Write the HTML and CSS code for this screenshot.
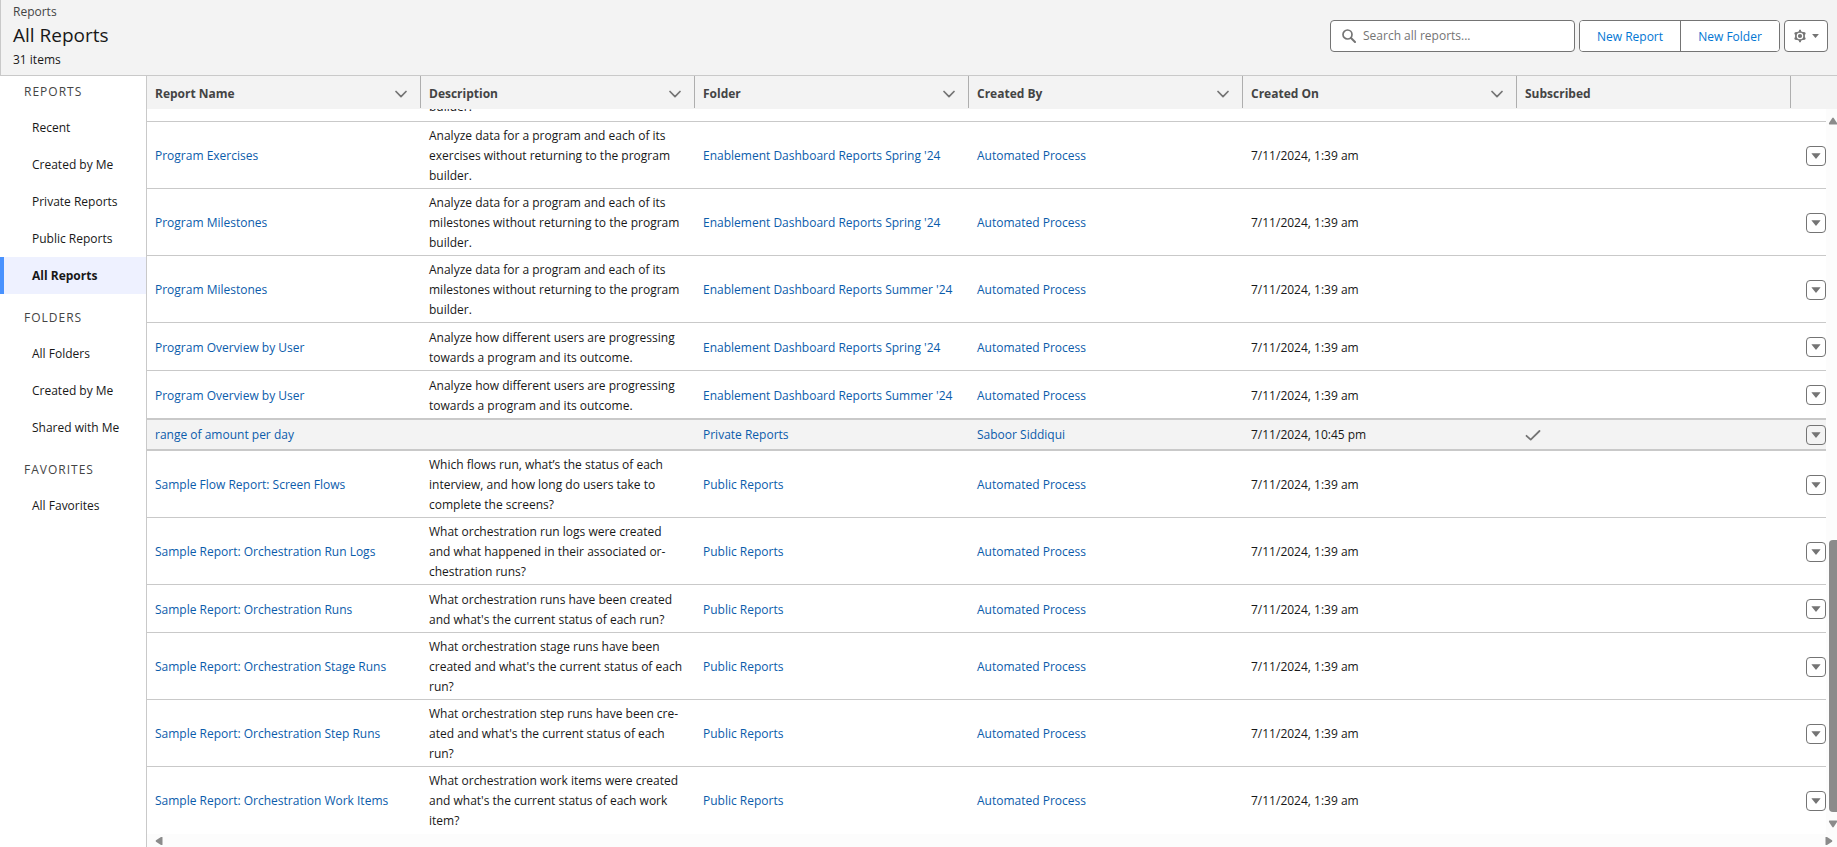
FILE: index.html
```
<!DOCTYPE html>
<html lang="en">
<head>
<meta charset="utf-8">
<title>All Reports</title>
<link rel="stylesheet" href="styles.css">
</head>
<body>
<svg class="sprite" aria-hidden="true">
  <symbol id="chevron" viewBox="0 0 12 12"><path d="M1 3.500 6 8.700 11 3.500" fill="none" stroke="currentColor" stroke-width="1.700" stroke-linecap="round" stroke-linejoin="round"/></symbol>
  <symbol id="down" viewBox="0 0 10 8"><path d="M.8 1.200H9.200Q9.600 1.400 9.300 1.800L5.400 6.600Q5 7 4.600 6.600L.7 1.800Q.4 1.400.8 1.200Z" fill="currentColor"/></symbol>
  <symbol id="check" viewBox="0 0 16 16"><path d="M1.500 8.800 5.700 12.600 14.500 4" fill="none" stroke="currentColor" stroke-width="1.800" stroke-linecap="round" stroke-linejoin="round"/></symbol>
</svg>
<div class="app">
  <header class="page-header">
    <div class="page-title">
      <p class="eyebrow">Reports</p>
      <h1>All Reports</h1>
      <p class="count">31 items</p>
    </div>
    <div class="actions">
      <label class="search">
        <svg class="search-icon" viewBox="0 0 14 14" aria-hidden="true"><circle cx="5.500" cy="5.500" r="4.500" fill="none" stroke="currentColor" stroke-width="1.700"/><path d="M9 9l4 4" stroke="currentColor" stroke-width="2" stroke-linecap="round"/></svg>
        <input type="search" placeholder="Search all reports..." aria-label="Search all reports">
      </label>
      <div class="button-group">
        <button type="button">New Report</button>
        <button type="button">New Folder</button>
      </div>
      <button type="button" class="settings" aria-label="Settings">
        <svg class="gear" viewBox="0 0 14 14" aria-hidden="true"><path d="M7 .8 8.300 3.200 12.200 3.900 11.200 7 12.200 10.100 8.300 10.800 7 13.200 5.700 10.800 1.800 10.100 2.800 7 1.800 3.900 5.700 3.200Z" fill="currentColor" stroke="currentColor" stroke-width="1" stroke-linejoin="round"/><circle cx="7" cy="7" r="2.700" fill="none" stroke="#fff" stroke-width="1.200"/></svg>
        <svg class="gear-arrow" aria-hidden="true"><use href="#down"/></svg>
      </button>
    </div>
  </header>
  <div class="content">
    <nav class="sidebar" aria-label="Reports and folders">
      <section>
        <h2>Reports</h2>
        <ul>
          <li><a href="#recent">Recent</a></li>
          <li><a href="#created">Created by Me</a></li>
          <li><a href="#private">Private Reports</a></li>
          <li><a href="#public">Public Reports</a></li>
          <li><a href="#all" class="active" aria-current="page">All Reports</a></li>
        </ul>
      </section>
      <section>
        <h2>Folders</h2>
        <ul>
          <li><a href="#folders">All Folders</a></li>
          <li><a href="#folders-created">Created by Me</a></li>
          <li><a href="#folders-shared">Shared with Me</a></li>
        </ul>
      </section>
      <section>
        <h2>Favorites</h2>
        <ul>
          <li><a href="#favorites">All Favorites</a></li>
        </ul>
      </section>
    </nav>
    <main class="list">
      <table class="head">
        <colgroup><col span="6"><col class="col-action-head"></colgroup>
        <thead>
          <tr>
            <th scope="col"><div class="th">Report Name<svg aria-hidden="true"><use href="#chevron"/></svg></div></th>
            <th scope="col"><div class="th">Description<svg aria-hidden="true"><use href="#chevron"/></svg></div></th>
            <th scope="col"><div class="th">Folder<svg aria-hidden="true"><use href="#chevron"/></svg></div></th>
            <th scope="col"><div class="th">Created By<svg aria-hidden="true"><use href="#chevron"/></svg></div></th>
            <th scope="col"><div class="th">Created On<svg aria-hidden="true"><use href="#chevron"/></svg></div></th>
            <th scope="col"><div class="th">Subscribed</div></th>
            <th aria-label="Actions"></th>
          </tr>
        </thead>
      </table>
      <div class="viewport" id="viewport">
        <table>
          <colgroup><col span="6"><col class="col-action"></colgroup>
          <tbody>
            <tr class="partial"><td></td><td>builder.</td><td></td><td></td><td></td><td></td><td></td></tr>
            <tr><td><a href="#r">Program Exercises</a></td><td>Analyze data for a program and each of its<br>exercises without returning to the program<br>builder.</td><td><a href="#f">Enablement Dashboard Reports Spring '24</a></td><td><a href="#u">Automated Process</a></td><td>7/11/2024, 1:39 am</td><td></td><td><button type="button" aria-label="Show actions"><svg aria-hidden="true"><use href="#down"/></svg></button></td></tr>
            <tr><td><a href="#r">Program Milestones</a></td><td>Analyze data for a program and each of its<br>milestones without returning to the program<br>builder.</td><td><a href="#f">Enablement Dashboard Reports Spring '24</a></td><td><a href="#u">Automated Process</a></td><td>7/11/2024, 1:39 am</td><td></td><td><button type="button" aria-label="Show actions"><svg aria-hidden="true"><use href="#down"/></svg></button></td></tr>
            <tr><td><a href="#r">Program Milestones</a></td><td>Analyze data for a program and each of its<br>milestones without returning to the program<br>builder.</td><td><a href="#f">Enablement Dashboard Reports Summer '24</a></td><td><a href="#u">Automated Process</a></td><td>7/11/2024, 1:39 am</td><td></td><td><button type="button" aria-label="Show actions"><svg aria-hidden="true"><use href="#down"/></svg></button></td></tr>
            <tr><td><a href="#r">Program Overview by User</a></td><td>Analyze how different users are progressing<br>towards a program and its outcome.</td><td><a href="#f">Enablement Dashboard Reports Spring '24</a></td><td><a href="#u">Automated Process</a></td><td>7/11/2024, 1:39 am</td><td></td><td><button type="button" aria-label="Show actions"><svg aria-hidden="true"><use href="#down"/></svg></button></td></tr>
            <tr><td><a href="#r">Program Overview by User</a></td><td>Analyze how different users are progressing<br>towards a program and its outcome.</td><td><a href="#f">Enablement Dashboard Reports Summer '24</a></td><td><a href="#u">Automated Process</a></td><td>7/11/2024, 1:39 am</td><td></td><td><button type="button" aria-label="Show actions"><svg aria-hidden="true"><use href="#down"/></svg></button></td></tr>
            <tr class="highlighted"><td><a href="#r">range of amount per day</a></td><td></td><td><a href="#f">Private Reports</a></td><td><a href="#u">Saboor Siddiqui</a></td><td>7/11/2024, 10:45 pm</td><td><svg class="check" role="img" aria-label="Subscribed"><use href="#check"/></svg></td><td><button type="button" aria-label="Show actions"><svg aria-hidden="true"><use href="#down"/></svg></button></td></tr>
            <tr><td><a href="#r">Sample Flow Report: Screen Flows</a></td><td>Which flows run, what’s the status of each<br>interview, and how long do users take to<br>complete the screens?</td><td><a href="#f">Public Reports</a></td><td><a href="#u">Automated Process</a></td><td>7/11/2024, 1:39 am</td><td></td><td><button type="button" aria-label="Show actions"><svg aria-hidden="true"><use href="#down"/></svg></button></td></tr>
            <tr><td><a href="#r">Sample Report: Orchestration Run Logs</a></td><td>What orchestration run logs were created<br>and what happened in their associated or-<br>chestration runs?</td><td><a href="#f">Public Reports</a></td><td><a href="#u">Automated Process</a></td><td>7/11/2024, 1:39 am</td><td></td><td><button type="button" aria-label="Show actions"><svg aria-hidden="true"><use href="#down"/></svg></button></td></tr>
            <tr><td><a href="#r">Sample Report: Orchestration Runs</a></td><td>What orchestration runs have been created<br>and what's the current status of each run?</td><td><a href="#f">Public Reports</a></td><td><a href="#u">Automated Process</a></td><td>7/11/2024, 1:39 am</td><td></td><td><button type="button" aria-label="Show actions"><svg aria-hidden="true"><use href="#down"/></svg></button></td></tr>
            <tr><td><a href="#r">Sample Report: Orchestration Stage Runs</a></td><td>What orchestration stage runs have been<br>created and what's the current status of each<br>run?</td><td><a href="#f">Public Reports</a></td><td><a href="#u">Automated Process</a></td><td>7/11/2024, 1:39 am</td><td></td><td><button type="button" aria-label="Show actions"><svg aria-hidden="true"><use href="#down"/></svg></button></td></tr>
            <tr><td><a href="#r">Sample Report: Orchestration Step Runs</a></td><td>What orchestration step runs have been cre-<br>ated and what's the current status of each<br>run?</td><td><a href="#f">Public Reports</a></td><td><a href="#u">Automated Process</a></td><td>7/11/2024, 1:39 am</td><td></td><td><button type="button" aria-label="Show actions"><svg aria-hidden="true"><use href="#down"/></svg></button></td></tr>
            <tr><td><a href="#r">Sample Report: Orchestration Work Items</a></td><td>What orchestration work items were created<br>and what's the current status of each work<br>item?</td><td><a href="#f">Public Reports</a></td><td><a href="#u">Automated Process</a></td><td>7/11/2024, 1:39 am</td><td></td><td><button type="button" aria-label="Show actions"><svg aria-hidden="true"><use href="#down"/></svg></button></td></tr>
          </tbody>
        </table>
      </div>
      <div class="vbar" aria-hidden="true">
        <svg class="arrow up" viewBox="0 0 10 8"><path d="M4.300 1Q5 .2 5.700 1L9 6Q9.300 7.500 8.500 7.500H1.500Q.7 7.500 1 6Z" fill="currentColor"/></svg>
        <div class="vbar-track"><div class="vbar-thumb"></div></div>
        <svg class="arrow" viewBox="0 0 10 8"><path d="M4.300 7Q5 7.800 5.700 7L9 2Q9.300.5 8.500.5H1.500Q.7.5 1 2Z" fill="currentColor"/></svg>
      </div>
      <div class="hbar" aria-hidden="true">
        <svg class="harrow" viewBox="0 0 8 10"><path d="M1 4.300Q.2 5 1 5.700L6 9Q7.500 9.300 7.500 8.500V1.500Q7.500.7 6 1Z" fill="currentColor"/></svg>
        <svg class="harrow" viewBox="0 0 8 10"><path d="M7 4.300Q7.800 5 7 5.700L2 9Q.5 9.300.5 8.500V1.500Q.5.7 2 1Z" fill="currentColor"/></svg>
      </div>
    </main>
  </div>
</div>
<script src="app.js"></script>
</body>
</html>
```
FILE: styles.css
```
* { box-sizing: border-box; }

body {
  margin: 0;
  color: #181818;
  background: #fff;
  font: 12px/20px "Segoe UI", "Open Sans", "Noto Sans", sans-serif;
}

h1, h2, p, ul { margin: 0; padding: 0; font-weight: 400; }
ul { list-style: none; }
a { color: #0b5cab; text-decoration: none; }
a:hover { text-decoration: underline; }
button, input { font: inherit; }
button { padding: 0; color: #0176d3; background: #fff; cursor: pointer; }
svg { display: block; flex: none; }

.sprite { position: absolute; width: 0; height: 0; }

.app { display: flex; flex-direction: column; height: 100vh; overflow: hidden; }

.page-header {
  display: flex;
  justify-content: space-between;
  align-items: flex-start;
  padding: 2px 9px 5px 12px;
  border-left: 1px solid #c9c9c9;
  border-bottom: 1px solid #c9c9c9;
  background: #f3f3f3;
}
.page-title h1 { padding-bottom: 2px; font-size: 19px; line-height: 26px; }
.page-title .eyebrow { color: #444; }

.actions { display: flex; gap: 4px; padding-top: 18px; }
.search, .button-group, .settings {
  display: flex;
  align-items: center;
  height: 32px;
  border: 1px solid #747474;
  border-radius: 4px;
  background: #fff;
}
.search { width: 245px; padding-left: 11px; gap: 7px; color: #747474; }
.search-icon { width: 14px; height: 14px; }
.search input { flex: 1; min-width: 0; padding: 0; border: 0; outline: 0; background: none; color: #181818; }
.search input::placeholder { color: #747474; opacity: 1; }
.button-group { overflow: hidden; }
.button-group button { width: 100px; height: 30px; padding-top: 1px; border: 0; }
.button-group button + button { border-left: 1px solid #747474; width: 99px; }
.settings { justify-content: center; gap: 5px; width: 44px; color: #747474; }
.gear { width: 14px; height: 14px; }
.gear-arrow { width: 7px; height: 6px; }

.content { display: flex; flex: 1; min-height: 0; }

.sidebar { flex: none; width: 147px; border-right: 1px solid #c9c9c9; }
.sidebar section + section { padding-top: 8px; }
.sidebar h2 {
  padding: 6px 24px 7px;
  color: #444;
  font-size: 12px;
  line-height: 20px;
  letter-spacing: 1px;
  text-transform: uppercase;
}
.sidebar a { display: block; padding: 0 8px 0 32px; color: #181818; line-height: 37px; white-space: nowrap; }
.sidebar .active { background: #eef1ff; box-shadow: inset 4px 0 #4992fe; font-weight: 700; }

.list {
  display: grid;
  flex: 1;
  min-width: 0;
  grid-template-columns: minmax(0, 1fr) 11px;
  grid-template-rows: auto minmax(0, 1fr) 13px;
}
.viewport { overflow: auto; scrollbar-width: none; }

table { width: 100%; table-layout: fixed; border-collapse: separate; border-spacing: 0; }
.head { grid-column: 1 / -1; background: #f3f3f3; }
.col-action { width: 35px; }
.col-action-head { width: 46px; }

th { padding: 0 0 1px; color: #444; text-align: left; }
.th {
  display: flex;
  align-items: center;
  justify-content: space-between;
  height: 32px;
  padding: 3px 13px 0 8px;
  border-right: 1px solid #aeaeae;
}
.th svg { width: 12px; height: 12px; color: #747474; }

tbody tr { height: 48px; }
td {
  padding: 4px 8px 2px;
  border-bottom: 1px solid #c9c9c9;
  vertical-align: middle;
  white-space: nowrap;
}
td:last-child { padding: 1px 0 0; }
tr:last-child td { border-bottom-color: transparent; }
td button {
  display: flex;
  align-items: center;
  justify-content: center;
  width: 20px;
  height: 20px;
  margin-left: auto;
  border: 1px solid #747474;
  border-radius: 4px;
  background: none;
  color: #747474;
}
td button svg { width: 10px; height: 8px; }
tbody .partial { height: 27px; }
.partial td { padding-block: 2px 4px; }
tbody .highlighted { height: 32px; }
.highlighted td { padding-block: 3px; border-top: 1px solid #c9c9c9; border-bottom-width: 2px; background: #f3f3f3; }
.check { width: 16px; height: 16px; color: #747474; }

.vbar { display: flex; flex-direction: column; background: #fcfcfc; color: #8b8b8b; }
.arrow { width: 10px; height: 8px; margin-left: 2px; }
.arrow.up { margin-top: 8px; }
.vbar-track { flex: 1; display: flex; flex-direction: column; justify-content: flex-end; padding: 8px 0 8px 3px; }
.vbar-thumb { height: 40%; border-radius: 4px 0 0 4px; background: #8b8b8b; }
.vbar .arrow:last-child { margin-bottom: 6px; }
.hbar {
  grid-column: 1 / -1;
  display: flex;
  justify-content: space-between;
  align-items: center;
  padding: 1px 4px 0 8px;
  background: #fcfcfc;
  color: #8b8b8b;
}
.harrow { width: 8px; height: 10px; }
```
FILE: app.js
```
const viewport = document.getElementById("viewport");
viewport.scrollTop = viewport.scrollHeight;
```
